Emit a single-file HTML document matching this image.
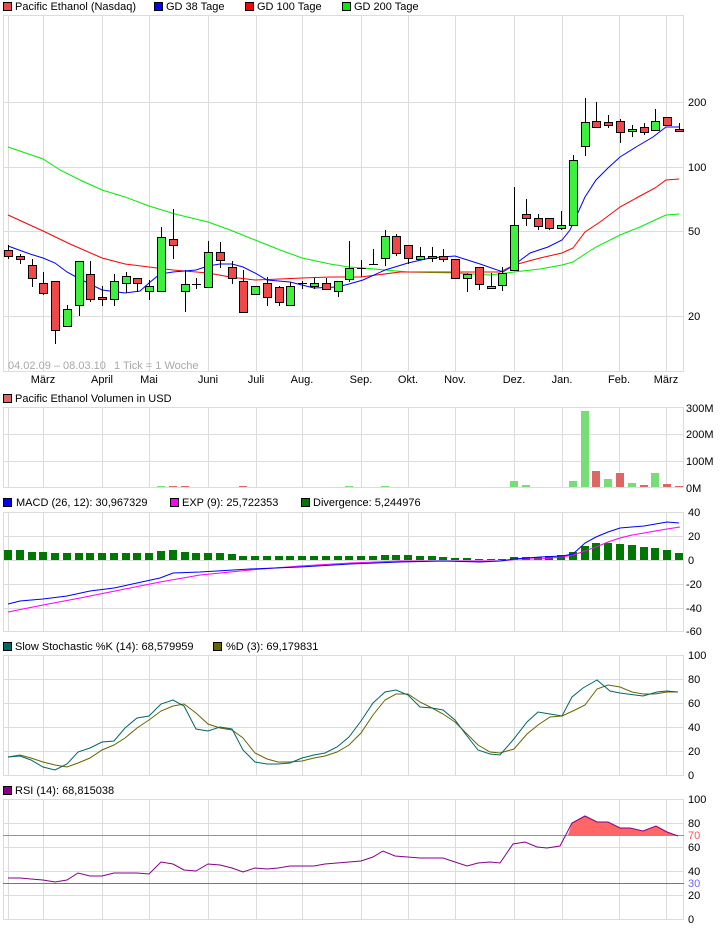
<!DOCTYPE html>
<html><head><meta charset="utf-8"><style>
html,body{margin:0;padding:0;background:#fff}
svg{display:block;font-family:"Liberation Sans",sans-serif;font-size:11px}
</style></head><body>
<svg width="726" height="928" viewBox="0 0 726 928" xmlns="http://www.w3.org/2000/svg">
<defs>
<g id="vg" stroke="#dcdcdc" stroke-width="1">
<path d="M8.5 0V1M43.5 0V1M102.5 0V1M149.5 0V1M208.5 0V1M256.5 0V1M302.5 0V1M361.5 0V1M408.5 0V1M455.5 0V1M514.5 0V1M562.5 0V1M619.5 0V1M666.5 0V1"/>
</g>
</defs>
<g>
<rect x="3.5" y="2.5" width="8" height="8" fill="#f04848" stroke="#000"/><text x="15" y="10">Pacific Ethanol (Nasdaq)</text>
<rect x="154.5" y="2.5" width="8" height="8" fill="#0000ff" stroke="#000"/><text x="166" y="10">GD 38 Tage</text>
<rect x="245.5" y="2.5" width="8" height="8" fill="#ff0000" stroke="#000"/><text x="257" y="10">GD 100 Tage</text>
<rect x="342.5" y="2.5" width="8" height="8" fill="#00ee00" stroke="#000"/><text x="354" y="10">GD 200 Tage</text>

<rect x="3.5" y="394.5" width="8" height="8" fill="#dd6666" stroke="#000"/><text x="15" y="402">Pacific Ethanol Volumen in USD</text>
<rect x="3.5" y="498.5" width="8" height="8" fill="#0000ff" stroke="#000"/><text x="16" y="506">MACD (26, 12): 30,967329</text>
<rect x="170.5" y="498.5" width="8" height="8" fill="#ff00ff" stroke="#000"/><text x="182" y="506">EXP (9): 25,722353</text>
<rect x="301.5" y="498.5" width="8" height="8" fill="#007700" stroke="#000"/><text x="313" y="506">Divergence: 5,244976</text>
<rect x="3.5" y="642.5" width="8" height="8" fill="#006666" stroke="#000"/><text x="15" y="650">Slow Stochastic %K (14): 68,579959</text>
<rect x="213.5" y="642.5" width="8" height="8" fill="#666600" stroke="#000"/><text x="226" y="650">%D (3): 69,179831</text>
<rect x="3.5" y="786.5" width="8" height="8" fill="#880088" stroke="#000"/><text x="15" y="794">RSI (14): 68,815038</text>
</g>

<g stroke="#dcdcdc" fill="none">
<rect x="3.5" y="15.5" width="680" height="356"/>
<use href="#vg" transform="translate(0,15) scale(1,357)"/>
<path d="M3 102.5H684M3 167.5H684M3 231.5H684M3 316.5H684"/>
<rect x="3.5" y="407.5" width="680" height="80"/>
<use href="#vg" transform="translate(0,407) scale(1,81)"/>
<path d="M3 434.5H684M3 461.5H684"/>
<rect x="3.5" y="512.5" width="680" height="119"/>
<use href="#vg" transform="translate(0,512) scale(1,120)"/>
<path d="M3 536.5H684M3 560.5H684M3 584.5H684M3 608.5H684"/>
<rect x="3.5" y="655.5" width="680" height="120"/>
<use href="#vg" transform="translate(0,655) scale(1,121)"/>
<path d="M3 679.5H684M3 703.5H684M3 727.5H684M3 751.5H684"/>
<rect x="3.5" y="799.5" width="680" height="120"/>
<use href="#vg" transform="translate(0,799) scale(1,121)"/>
<path d="M3 823.5H684M3 847.5H684M3 871.5H684M3 895.5H684"/>
</g>

<g fill="#000">
<text x="688" y="106">200</text><text x="688" y="171">100</text><text x="688" y="235">50</text><text x="688" y="320">20</text>
<text x="686" y="412">300M</text><text x="686" y="438">200M</text><text x="686" y="465">100M</text><text x="686" y="492">0M</text>
<text x="688" y="516">40</text><text x="688" y="540">20</text><text x="688" y="564">0</text><text x="686" y="588">-20</text><text x="686" y="612">-40</text><text x="686" y="635">-60</text>
<text x="688" y="659">100</text><text x="688" y="683">80</text><text x="688" y="707">60</text><text x="688" y="731">40</text><text x="688" y="755">20</text><text x="688" y="779">0</text>
<text x="688" y="803">100</text><text x="688" y="827">80</text><text x="688" y="851">60</text><text x="688" y="875">40</text><text x="688" y="899">20</text><text x="688" y="923">0</text>
<text x="688" y="839" fill="#ff5555">70</text><text x="688" y="887" fill="#6666ff">30</text>
</g>
<g text-anchor="middle">
<text x="43" y="383">März</text><text x="102" y="383">April</text><text x="149" y="383">Mai</text><text x="208" y="383">Juni</text><text x="256" y="383">Juli</text><text x="302" y="383">Aug.</text><text x="361" y="383">Sep.</text><text x="408" y="383">Okt.</text><text x="455" y="383">Nov.</text><text x="514" y="383">Dez.</text><text x="562" y="383">Jan.</text><text x="619" y="383">Feb.</text><text x="666" y="383">März</text>
</g>
<text x="8" y="369" fill="#a8a8a8">04.02.09 – 08.03.10</text>
<text x="114" y="369" fill="#a8a8a8">1 Tick = 1 Woche</text>

<g fill="none" stroke-width="1">
<polyline stroke="#00ee00" points="8,147 43,159 60,170 80,180 102,190 125,197 149,206 175,214 208,222 230,230 255,240 280,250 302,258 330,264 349,267 363,268 408,272 455,273 490,275 514,272 540,269 562,265 573,262 585,254 596,247 620,235 640,227 655,220 666,215 679,214"/>
<polyline stroke="#ff0000" points="8,215 43,231 70,244 102,258 125,264 149,267 173,270 208,273 230,277 255,280 280,279 302,278 330,277 361,277 400,272 455,272 500,272 514,265 540,258 562,253 573,248 585,232 600,222 620,207 640,196 655,188 666,180 679,179"/>
<polyline stroke="#0000ff" points="8,246 30,254 43,258 55,263 67,272 78,278 102,290 125,293 140,291 149,283 160,274 173,272 196,270 208,266 220,264 232,264 243,267 255,273 267,280 290,282 314,288 337,287 349,284 363,280 385,270 408,263 430,258 455,256 480,264 503,272 514,265 530,253 548,247 562,240 570,230 576,217 585,197 596,180 608,168 620,157 636,147 653,137 666,127 679,127"/>
</g>

<g stroke="#000" stroke-width="1">
<g fill="#f04848">
<path d="M8.5 245V259M20.5 254V264M32.5 259V287M43.5 272V295M55.5 281V344M90.5 261V302M102.5 286V306M137.5 278V292M173.5 209V259M220.5 242V268M232.5 261V284M243.5 270V312M267.5 277V306M279.5 286V306M326.5 278V290M396.5 234V256M408.5 245V264M432.5 247V262M443.5 249V262M455.5 259V278M479.5 267V290M526.5 199V226M538.5 214V230M549.5 218V230M596.5 102V128M608.5 115V128M620.5 119V143M644.5 123V135M667.5 117V125M679.5 123V131"/>
<rect x="4.5" y="250.5" width="8" height="6"/><rect x="16.5" y="256.5" width="8" height="3"/><rect x="28.5" y="265.5" width="8" height="13"/><rect x="39.5" y="283.5" width="8" height="10"/><rect x="51.5" y="281.5" width="8" height="49"/><rect x="86.5" y="274.5" width="8" height="25"/><rect x="98.5" y="297.5" width="8" height="2"/><rect x="133.5" y="278.5" width="8" height="5"/><rect x="169.5" y="239.5" width="8" height="6"/><rect x="216.5" y="252.5" width="8" height="8"/><rect x="228.5" y="267.5" width="8" height="11"/><rect x="239.5" y="281.5" width="8" height="31"/><rect x="263.5" y="283.5" width="8" height="14"/><rect x="275.5" y="287.5" width="8" height="15"/><rect x="322.5" y="283.5" width="8" height="6"/><rect x="392.5" y="236.5" width="8" height="17"/><rect x="404.5" y="245.5" width="8" height="13"/><rect x="428.5" y="256.5" width="8" height="2"/><rect x="439.5" y="256.5" width="8" height="3"/><rect x="451.5" y="259.5" width="8" height="19"/><rect x="475.5" y="267.5" width="8" height="17"/><rect x="522.5" y="214.5" width="8" height="4"/><rect x="534.5" y="218.5" width="8" height="8"/><rect x="545.5" y="218.5" width="8" height="10"/><rect x="592.5" y="121.5" width="8" height="6"/><rect x="604.5" y="122.5" width="8" height="3"/><rect x="616.5" y="121.5" width="8" height="11"/><rect x="640.5" y="127.5" width="8" height="5"/><rect x="663.5" y="117.5" width="8" height="8"/><rect x="675.5" y="129.5" width="8" height="2"/>
</g>
<g fill="#3ef03e">
<path d="M67.5 305V326M79.5 261V316M114.5 274V306M126.5 272V293M149.5 280V300M161.5 227V291M185.5 270V312M196.5 278V289M208.5 241V287M255.5 286V294M290.5 282V305M302.5 281V289M314.5 278V289M338.5 281V297M349.5 241V282M361.5 260V277M373.5 249V264M385.5 230V266M420.5 247V259M467.5 273V292M491.5 273V288M502.5 267V291M514.5 187V270M561.5 211V230M573.5 155V225M585.5 98V156M632.5 125V137M655.5 109V130"/>
<rect x="63.5" y="309.5" width="8" height="17"/><rect x="75.5" y="261.5" width="8" height="44"/><rect x="110.5" y="281.5" width="8" height="18"/><rect x="122.5" y="276.5" width="8" height="7"/><rect x="145.5" y="286.5" width="8" height="5"/><rect x="157.5" y="237.5" width="8" height="54"/><rect x="181.5" y="284.5" width="8" height="7"/><rect x="204.5" y="252.5" width="8" height="35"/><rect x="251.5" y="286.5" width="8" height="8"/><rect x="286.5" y="286.5" width="8" height="19"/><rect x="310.5" y="283.5" width="8" height="3"/><rect x="334.5" y="281.5" width="8" height="10"/><rect x="345.5" y="268.5" width="8" height="11"/><rect x="381.5" y="236.5" width="8" height="22"/><rect x="416.5" y="256.5" width="8" height="3"/><rect x="463.5" y="274.5" width="8" height="4"/><rect x="487.5" y="286.5" width="8" height="2"/><rect x="498.5" y="273.5" width="8" height="12"/><rect x="510.5" y="225.5" width="8" height="45"/><rect x="557.5" y="225.5" width="8" height="3"/><rect x="569.5" y="160.5" width="8" height="65"/><rect x="581.5" y="122.5" width="8" height="24"/><rect x="628.5" y="129.5" width="8" height="2"/><rect x="651.5" y="121.5" width="8" height="9"/>
</g>
<path d="M192 284.5H201M298 283.5H307M357 268.5H366M369 264.5H378" stroke-width="1"/>
</g>

<g>
<g fill="#77dd77"><rect x="510" y="481" width="8" height="6"/><rect x="522" y="485" width="8" height="2"/><rect x="569" y="481" width="8" height="6"/><rect x="581" y="411" width="8" height="76"/><rect x="604" y="479" width="8" height="8"/><rect x="628" y="483" width="8" height="4"/><rect x="651" y="473" width="8" height="14"/><rect x="157" y="486" width="8" height="1"/><rect x="345" y="486" width="8" height="1"/><rect x="381" y="486" width="8" height="1"/></g>
<g fill="#dd6666"><rect x="592" y="471" width="8" height="16"/><rect x="616" y="473" width="8" height="14"/><rect x="640" y="485" width="8" height="2"/><rect x="663" y="484" width="8" height="3"/><rect x="675" y="486" width="8" height="1"/><rect x="169" y="486" width="8" height="1"/><rect x="181" y="486" width="8" height="1"/><rect x="239" y="486" width="8" height="1"/></g>
</g>

<g fill="#007700">
<rect x="4" y="550" width="8" height="10"/><rect x="16" y="550" width="8" height="10"/><rect x="28" y="552" width="8" height="8"/><rect x="39" y="552" width="8" height="8"/><rect x="51" y="553" width="8" height="7"/><rect x="63" y="553" width="8" height="7"/><rect x="75" y="553" width="8" height="7"/><rect x="86" y="553" width="8" height="7"/><rect x="98" y="553" width="8" height="7"/><rect x="110" y="553" width="8" height="7"/><rect x="122" y="553" width="8" height="7"/><rect x="133" y="553" width="8" height="7"/><rect x="145" y="553" width="8" height="7"/><rect x="157" y="551" width="8" height="9"/><rect x="169" y="550" width="8" height="10"/><rect x="181" y="552" width="8" height="8"/><rect x="192" y="553" width="8" height="7"/><rect x="204" y="553" width="8" height="7"/><rect x="216" y="553" width="8" height="7"/><rect x="228" y="554" width="8" height="6"/><rect x="239" y="556" width="8" height="4"/><rect x="251" y="556" width="8" height="4"/><rect x="263" y="556" width="8" height="4"/><rect x="275" y="556" width="8" height="4"/><rect x="286" y="556" width="8" height="4"/><rect x="298" y="556" width="8" height="4"/><rect x="310" y="556" width="8" height="4"/><rect x="322" y="556" width="8" height="4"/><rect x="334" y="556" width="8" height="4"/><rect x="345" y="556" width="8" height="4"/><rect x="357" y="556" width="8" height="4"/><rect x="369" y="556" width="8" height="4"/><rect x="381" y="555" width="8" height="5"/><rect x="392" y="555" width="8" height="5"/><rect x="404" y="555" width="8" height="5"/><rect x="416" y="556" width="8" height="4"/><rect x="428" y="556" width="8" height="4"/><rect x="439" y="557" width="8" height="3"/><rect x="451" y="558" width="8" height="2"/><rect x="463" y="558" width="8" height="2"/><rect x="475" y="559" width="8" height="1"/><rect x="487" y="559" width="8" height="1"/><rect x="498" y="559" width="8" height="1"/><rect x="510" y="557" width="8" height="3"/><rect x="522" y="557" width="8" height="3"/><rect x="534" y="557" width="8" height="3"/><rect x="545" y="556" width="8" height="4"/><rect x="557" y="555" width="8" height="5"/><rect x="569" y="552" width="8" height="8"/><rect x="581" y="546" width="8" height="14"/><rect x="592" y="543" width="8" height="17"/><rect x="604" y="543" width="8" height="17"/><rect x="616" y="544" width="8" height="16"/><rect x="628" y="545" width="8" height="15"/><rect x="640" y="547" width="8" height="13"/><rect x="651" y="548" width="8" height="12"/><rect x="663" y="550" width="8" height="10"/><rect x="675" y="553" width="8" height="7"/>
</g>
<g fill="none">
<polyline stroke="#ff00ff" points="8,612 43,605 80,598 120,590 160,582 200,575 250,570 300,566 350,563 400,561 450,561 500,561 520,559 540,559 562,557 573,555 585,551 596,547 608,542 620,538 632,535 644,533 655,531 667,529 680,527"/>
<polyline stroke="#0000ff" points="8,604 20,601 43,599 67,596 90,591 114,588 137,583 160,578 173,573 200,572 250,569 300,567 350,564 400,562 443,561 480,562 500,561 514,559 540,557 562,556 573,554 585,543 596,537 608,532 620,528 644,526 667,522 679,523"/>
</g>

<g fill="none">
<polyline stroke="#666600" points="8,757 20,755 31,758 43,762 55,765 67,767 78,763 90,758 102,750 114,745 125,738 137,728 149,720 161,711 173,706 184,704 196,713 208,724 220,728 232,730 243,738 255,753 267,759 278,762 290,762 302,761 314,758 325,756 337,752 349,745 361,733 373,715 385,700 396,694 408,694 420,702 432,708 443,714 455,722 467,734 478,745 490,752 500,753 514,749 527,734 538,725 550,717 562,716 575,710 585,705 597,689 608,685 620,687 632,692 643,694 655,694 667,692 678,692"/>
<polyline stroke="#006666" points="8,757 20,756 31,760 43,767 55,770 67,764 78,752 90,748 102,742 114,741 125,728 137,718 149,716 161,704 173,700 184,706 196,729 208,731 220,727 232,729 243,750 255,762 267,764 278,764 290,763 302,758 314,755 325,753 337,747 349,737 361,721 373,703 385,692 396,690 408,695 420,707 432,708 443,710 455,720 467,736 478,750 490,754 500,755 513,740 527,722 538,712 550,714 562,716 572,697 583,688 597,680 610,691 620,693 643,696 657,692 667,691 678,692"/>
</g>

<path d="M568 835L572 823L585 816L597 822L608 822L620 828L630 828L643 831L656 826L667 832L676 835Z" fill="#ff6666"/>
<path d="M3 835.5H684" stroke="#ff6666"/>
<path d="M3 883.5H684" stroke="#6666ff"/>
<polyline fill="none" stroke="#880088" points="8,878 20,878 31,879 43,880 55,882 67,880 78,873 90,876 102,876 114,873 137,873 149,874 161,862 173,864 184,870 196,871 208,864 220,865 232,868 243,872 255,868 267,869 278,868 290,866 302,866 314,866 325,864 349,862 361,861 373,857 383,851 395,856 420,858 443,858 455,862 467,866 478,863 490,862 500,863 513,844 525,842 537,847 547,848 560,846 572,823 585,816 597,822 608,822 620,828 630,828 643,831 656,826 667,832 678,836"/>
</svg>
</body></html>
